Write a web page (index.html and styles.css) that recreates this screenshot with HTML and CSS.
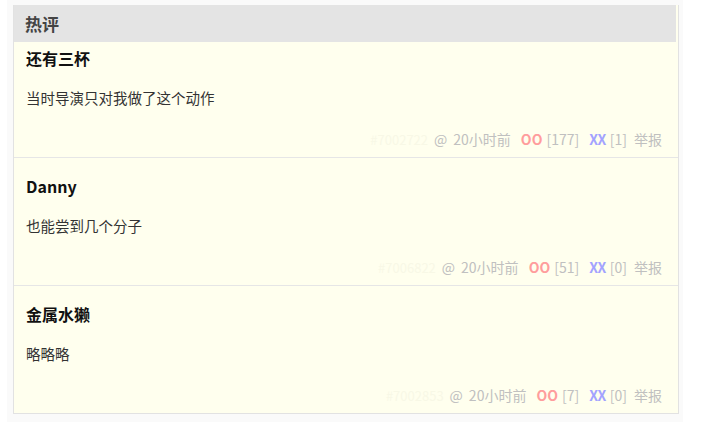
FILE: index.html
```html
<!DOCTYPE html>
<html lang="zh-CN">
<head>
<meta charset="utf-8">
<title>热评</title>
<link rel="stylesheet" href="styles.css">
</head>
<body>
<div class="wrap">
  <div class="panel">
    <div class="head">热评</div>
    <div class="row first">
      <div class="name">还有三杯</div>
      <div class="text">当时导演只对我做了这个动作</div>
      <div class="foot"><span class="id">#7002722</span><span class="at">@</span><span class="time">20小时前</span><span class="oo">OO</span><span class="num">[177]</span><span class="xx">XX</span><span class="num">[1]</span><span class="rep">举报</span></div>
    </div>
    <div class="row">
      <div class="name">Danny</div>
      <div class="text">也能尝到几个分子</div>
      <div class="foot"><span class="id">#7006822</span><span class="at">@</span><span class="time">20小时前</span><span class="oo">OO</span><span class="num">[51]</span><span class="xx">XX</span><span class="num">[0]</span><span class="rep">举报</span></div>
    </div>
    <div class="row last">
      <div class="name">金属水獭</div>
      <div class="text">略略略</div>
      <div class="foot"><span class="id">#7002853</span><span class="at">@</span><span class="time">20小时前</span><span class="oo">OO</span><span class="num">[7]</span><span class="xx">XX</span><span class="num">[0]</span><span class="rep">举报</span></div>
    </div>
  </div>
</div>
</body>
</html>
```

FILE: styles.css
```css
html, body {
  margin: 0;
  padding: 0;
  background: #ffffff;
}
body {
  font-family: "Noto Sans CJK SC", "Noto Sans", "Liberation Sans", sans-serif;
  color: #333;
}
.wrap {
  margin-left: 7px;
  width: 666px;
  padding: 5px 4px 8px 6px;
  background: #fafafa;
}
.panel {
  border: 1px solid #e2e2e2;
  border-top: none;
  background: #ffffee;
}
.head {
  margin-right: 2px;
  height: 37px;
  line-height: 37px;
  padding-left: 11px;
  background: #e4e4e4;
  color: #444;
  font-size: 17px;
  font-weight: bold;
}
.row {
  padding: 12px 16px 7px 12px;
  border-bottom: 1px solid #e6e6e6;
}
.row.first {
  padding-top: 0;
}
.row.last {
  border-bottom: none;
}
.name {
  font-size: 16px;
  font-weight: bold;
  line-height: 32px;
  color: #111;
}
.text {
  margin-top: 12px;
  font-size: 14.5px;
  line-height: 24px;
  color: #333;
}
.foot {
  margin-top: 19px;
  line-height: 20px;
  font-size: 14px;
  color: #c0c0c0;
  display: flex;
  justify-content: flex-end;
  align-items: baseline;
}
.id {
  color: #f8f8e6;
  margin-right: 6px;
  font-size: 13px;
}
.at {
  margin-right: 6px;
}
.time {
  margin-right: 10px;
}
.oo {
  color: #ff9d9d;
  font-weight: bold;
  margin-right: 4px;
}
.xx {
  color: #a3a3ff;
  font-weight: bold;
  margin-right: 4px;
  letter-spacing: -0.5px;
}
.num {
  margin-right: 10px;
}
.num + .rep {
  margin-left: -3px;
}
```
